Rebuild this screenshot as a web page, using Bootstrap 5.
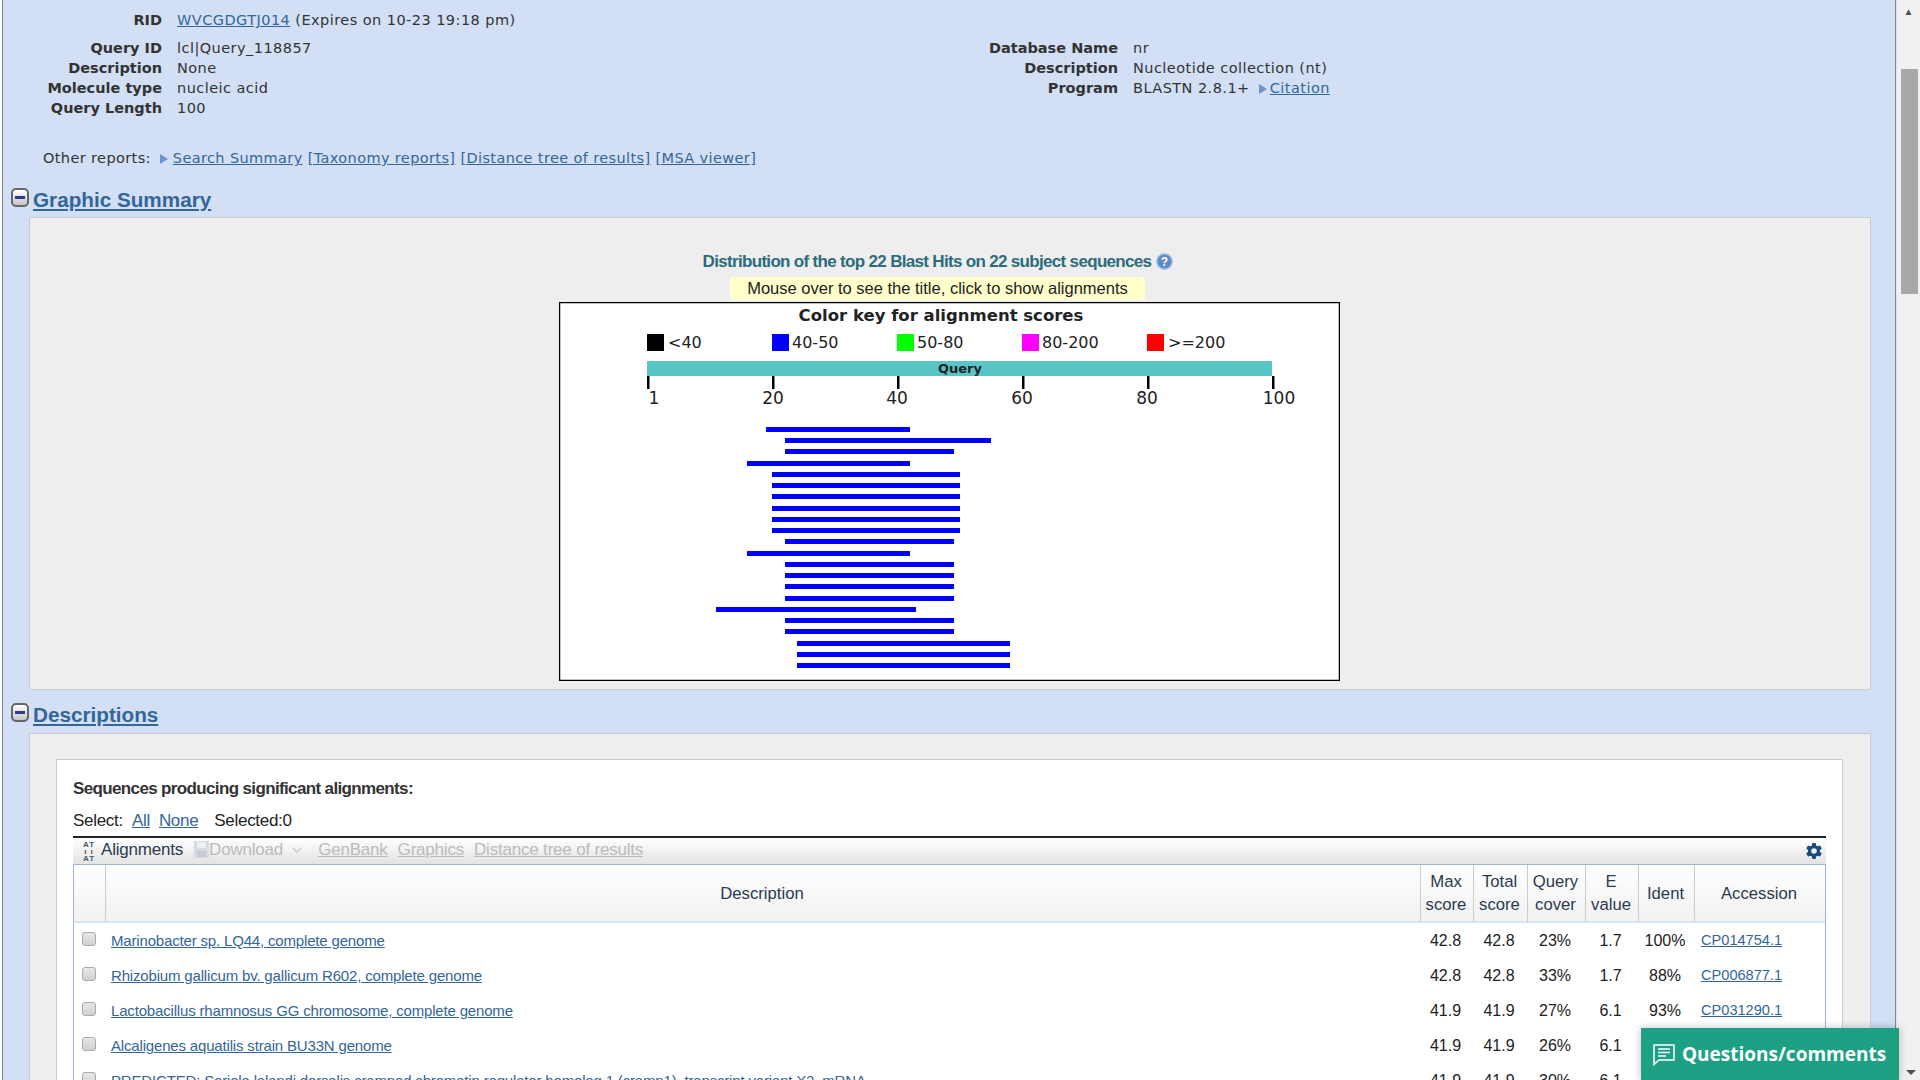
<!DOCTYPE html>
<html lang="en">
<head>
  <meta charset="UTF-8" />
  <title>NCBI Blast: Nucleotide Sequence</title>
  <link href="https://cdn.jsdelivr.net/npm/bootstrap@5.3.0/dist/css/bootstrap.min.css" rel="stylesheet"/>
  <style>
    html, body { height: 100%; overflow: hidden; }
    body { background: #fff; font-family: "Liberation Sans", Arial, sans-serif; font-size: 15px; color: #222; }
    a { color: #336699; }
    .page-wrap { height: 1080px; }
    .blast-main { width: 1894px; height: 1080px; overflow: hidden; margin-left: 2px; background: #d2dff5; border-left: 1px solid #7d8794; border-right: 1px solid #7d8794; padding-left: 8px; flex: none; }
    .fake-scroll { width: 24px; background: #f1f1f1; border-left: 1px solid #e4e4e4; flex: none; }
    .fake-thumb { width: 17px; height: 225px; background: #a8a8a8; margin: 0 2px 0 auto; }
    .scroll-arrow { height: 69px; color: #505050; font-size: 10px; text-align: center; padding-top: 5px; line-height: 14px; }
    .scroll-down { position: absolute; bottom: 5px; right: 4px; width: 0; height: 0; border: 5px solid transparent; border-top: 5px solid #505050; border-bottom: 0; }
    .info-block { font-family: "DejaVu Sans", Verdana, sans-serif; font-size: 14.5px; letter-spacing: .45px; line-height: 20px; color: #333; height: 178px; padding-top: 10px; }
    .info-row { display: flex; }
    .info-key { font-weight: 700; text-align: right; width: 151px; margin-right: 15px; flex: none; letter-spacing: 0; }
    .info-cols { margin-top: 8px; }
    .info-left { width: 931px; flex: none; }
    .info-right .info-key { width: 176px; }
    .other-reports { font-family: "DejaVu Sans", Verdana, sans-serif; font-size: 14.5px; letter-spacing: .38px; line-height: 20px; color: #333; padding-left: 32px; height: 35px; margin-top: -31px; padding-top: 1px; }
    .tri { display: inline-block; width: 0; height: 0; border: 5px solid transparent; border-left: 8px solid #6d94cc; border-right: 0; vertical-align: -1px; margin: 0 3px 0 0; }
    .other-reports .tri { margin-right: 5px; }
    .sec-title { font-size: 20.7px; font-weight: 700; line-height: 24px; height: 35px; display: flex; align-items: center; gap: 4px; }
    .sec-second { height: 37px; }
    .toggle-box { width: 18px; height: 19px; border: 2px solid #666; border-radius: 5px; background: linear-gradient(#fff, #c5c5c5); display: flex; align-items: center; justify-content: center; margin-top: -4px; }
    .toggle-box span { display: block; width: 10px; height: 3px; background: #2a3a8c; }
    .grey-panel { background: #eee; border: 1px solid #ccc; margin-left: 18px; width: 1842px; }
    .graphic-panel { height: 473px; margin-bottom: 6px; padding-top: 33px; }
    .dist-title { font-size: 17px; font-weight: 700; color: #2b6c7c; letter-spacing: -0.68px; line-height: 22px; height: 26px; padding-right: 24px; }
    .help-dot { vertical-align: -3px; margin-left: 5px; }
    .help-dot text { font-family: "Liberation Sans", sans-serif; font-weight: 700; font-size: 12px; fill: #fff; letter-spacing: 0; }
    .hint-box { background: #ffc; width: 415px; height: 23px; line-height: 22px; font-size: 16.5px; color: #222; text-align: center; margin-left: 700px; }
    .score-chart { display: block; width: 781px; height: 379px; margin: 2px 0 0 529px; }
    .score-chart text { font-family: "DejaVu Sans", Verdana, sans-serif; fill: #222; }
    .desc-panel { height: 400px; padding: 25px 27px 0 26px; }
    .white-panel { background: #fff; border: 1px solid #ccc; height: 400px; padding: 0 16px; }
    .seq-title { font-size: 17px; font-weight: 700; letter-spacing: -0.64px; line-height: 20px; padding-top: 19px; height: 51px; color: #333; }
    .sel-line { font-size: 17px; letter-spacing: -0.3px; line-height: 20px; height: 25px; color: #222; display: flex; }
    .sel-line a { margin-left: 9px; }
    .tool-bar { height: 29px; border-top: 2px solid #222; border-bottom: 1px solid #9db6d5; background: linear-gradient(#fff, #e3e3e3); display: flex; align-items: center; font-size: 17px; letter-spacing: -0.2px; padding-left: 9px; padding-bottom: 3px; color: #2a3a50; position: relative; }
    .tool-bar a.off { color: #bbb; margin-right: 10px; }
    .off-text { color: #bbb; margin-right: 9px; }
    .save-icon { margin-left: 11px; }
    .drop-arrow { margin-right: 16px; }
    .at-icon { display: flex; flex-direction: column; align-items: center; width: 14px; font-size: 8px; line-height: 7px; font-weight: 700; letter-spacing: 1px; color: #44566e; margin-right: 5px; margin-top: 3px; }
    .gear-icon { top: 5px; }
    .hits-wrap { border-left: 1px solid #9db6d5; border-right: 1px solid #9db6d5; }
    .hits-table { font-size: 16px; margin: 0; table-layout: fixed; width: 100%; color: #222; border-collapse: separate; border-spacing: 0; }
    .hits-table th { font-weight: 400; font-size: 16.7px; text-align: center; line-height: 23px; padding: 0 2px 0 0; height: 58px; background: linear-gradient(#fff 0%, #f1f1f1 100%); border-bottom: 2px solid #dce4ee; border-left: 1px solid #ccc; color: #2a3a50; vertical-align: middle; }
    .hits-table th:first-child { border-left: 0; }
    .hits-table td { height: 35px; padding: 1px 2px 0 0; text-align: center; vertical-align: middle; }
    .hits-table td.seq-desc { text-align: left; padding-left: 6px; font-size: 15px; letter-spacing: -0.17px; white-space: nowrap; overflow: hidden; }
    .hits-table td.acc { text-align: left; padding-left: 7px; font-size: 14.6px; }
    .hit-check { display: block; width: 14px; height: 14px; border: 1px solid #aaa; border-radius: 3px; background: linear-gradient(#e8e8e8, #d0d0d0); margin: -4px 0 0 8px; }
    .qc-btn { position: absolute; right: 21px; bottom: 0; width: 258px; height: 52px; background: #1da083; color: #fff; font-family: "Open Sans", sans-serif; font-weight: 700; font-size: 19px; display: flex; align-items: center; gap: 6px; padding-left: 11px; box-shadow: 0 0 8px rgba(0,0,0,.25); }
  </style>
</head>
<body>
  <div class="page-wrap d-flex position-relative">
    <div class="blast-main">
      <div class="info-block">
        <div class="info-row"><div class="info-key">RID</div><div><a href="#">WVCGDGTJ014</a> (Expires on 10-23 19:18 pm)</div></div>
        <div class="d-flex info-cols">
          <div class="info-left">
            <div class="info-row"><div class="info-key">Query ID</div><div>lcl|Query_118857</div></div>
            <div class="info-row"><div class="info-key">Description</div><div>None</div></div>
            <div class="info-row"><div class="info-key">Molecule type</div><div>nucleic acid</div></div>
            <div class="info-row"><div class="info-key">Query Length</div><div>100</div></div>
          </div>
          <div class="info-right">
            <div class="info-row"><div class="info-key">Database Name</div><div>nr</div></div>
            <div class="info-row"><div class="info-key">Description</div><div>Nucleotide collection (nt)</div></div>
            <div class="info-row"><div class="info-key">Program</div><div>BLASTN 2.8.1+ <i class="tri ms-1"></i><a href="#">Citation</a></div></div>
          </div>
        </div>
      </div>
      <div class="other-reports">Other reports: <i class="tri ms-1"></i><a href="#">Search Summary</a> <a href="#">[Taxonomy reports]</a> <a href="#">[Distance tree of results]</a> <a href="#">[MSA viewer]</a></div>

      <div class="sec-title"><div class="toggle-box"><span></span></div><a href="#">Graphic Summary</a></div>
      <div class="grey-panel graphic-panel">
        <div class="dist-title text-center">Distribution of the top 22 Blast Hits on 22 subject sequences<svg class="help-dot" width="17" height="17" viewBox="0 0 17 17"><circle cx="8.500" cy="8.500" r="8.500" fill="#a9c2e6"/><circle cx="8.500" cy="8.500" r="7" fill="#5f8cc8"/><text x="8.500" y="13" text-anchor="middle">?</text></svg></div>
        <div class="hint-box">Mouse over to see the title, click to show alignments</div>
        <svg class="score-chart" viewBox="559 302 781 379">
          <rect x="559.500" y="302.500" width="780" height="378" fill="#fff" stroke="#000" stroke-width="1.500"/>
          <text x="941" y="321" text-anchor="middle" font-size="16.500" font-weight="700">Color key for alignment scores</text>
          <rect x="647" y="334" width="17" height="17" fill="#000"/><text x="668" y="348" font-size="16">&lt;40</text>
          <rect x="772" y="334" width="17" height="17" fill="#00f"/><text x="792" y="348" font-size="16">40-50</text>
          <rect x="897" y="334" width="17" height="17" fill="#0f0"/><text x="917" y="348" font-size="16">50-80</text>
          <rect x="1022" y="334" width="17" height="17" fill="#f0f"/><text x="1042" y="348" font-size="16">80-200</text>
          <rect x="1147" y="334" width="17" height="17" fill="#f00"/><text x="1168" y="348" font-size="16">&gt;=200</text>
          <rect x="647" y="361" width="625" height="15" fill="#58c6c6"/>
          <text x="960" y="373" text-anchor="middle" font-size="13" font-weight="700">Query</text>
          <g fill="#000">
            <rect x="647" y="376" width="2.500" height="13"/><rect x="772" y="376" width="2.500" height="13"/><rect x="897" y="376" width="2.500" height="13"/>
            <rect x="1022" y="376" width="2.500" height="13"/><rect x="1147" y="376" width="2.500" height="13"/><rect x="1272" y="376" width="2.500" height="13"/>
          </g>
          <g font-size="17" text-anchor="middle">
            <text x="654" y="404">1</text><text x="773" y="404">20</text><text x="897" y="404">40</text>
            <text x="1022" y="404">60</text><text x="1147" y="404">80</text><text x="1279" y="404">100</text>
          </g>
          <g fill="#00f">
            <rect x="766" y="427" width="144" height="5"/>
            <rect x="785" y="438" width="206" height="5"/>
            <rect x="785" y="449" width="169" height="5"/>
            <rect x="747" y="461" width="163" height="5"/>
            <rect x="772" y="472" width="188" height="5"/>
            <rect x="772" y="483" width="188" height="5"/>
            <rect x="772" y="494" width="188" height="5"/>
            <rect x="772" y="506" width="188" height="5"/>
            <rect x="772" y="517" width="188" height="5"/>
            <rect x="772" y="528" width="188" height="5"/>
            <rect x="785" y="539" width="169" height="5"/>
            <rect x="747" y="551" width="163" height="5"/>
            <rect x="785" y="562" width="169" height="5"/>
            <rect x="785" y="573" width="169" height="5"/>
            <rect x="785" y="584" width="169" height="5"/>
            <rect x="785" y="596" width="169" height="5"/>
            <rect x="716" y="607" width="200" height="5"/>
            <rect x="785" y="618" width="169" height="5"/>
            <rect x="785" y="629" width="169" height="5"/>
            <rect x="797" y="641" width="213" height="5"/>
            <rect x="797" y="652" width="213" height="5"/>
            <rect x="797" y="663" width="213" height="5"/>
          </g>
        </svg>
      </div>

      <div class="sec-title sec-second"><div class="toggle-box"><span></span></div><a href="#">Descriptions</a></div>
      <div class="grey-panel desc-panel">
        <div class="white-panel">
          <div class="seq-title">Sequences producing significant alignments:</div>
          <div class="sel-line"><span>Select:</span><a href="#">All</a><a href="#">None</a><span class="ms-3">Selected:0</span></div>
          <div class="tool-bar">
            <div class="at-icon"><span>AT</span><span>ı ı</span><span>AT</span></div>
            <span>Alignments</span>
            <svg width="15" height="17" viewBox="0 0 15 17" class="save-icon"><rect width="15" height="17" rx="1" fill="#d6dbe2"/><rect x="3" y="1" width="9" height="6" fill="#eef0f3"/><rect x="3" y="10" width="9" height="6" fill="#c5cbd4"/></svg>
            <span class="off-text">Download</span>
            <svg width="10" height="6" viewBox="0 0 10 6" class="drop-arrow"><path d="M1 1l4 4 4-4" fill="none" stroke="#c5cbd4" stroke-width="1.500"/></svg>
            <a href="#" class="off">GenBank</a><a href="#" class="off">Graphics</a><a href="#" class="off">Distance tree of results</a>
            <svg width="16" height="16" viewBox="0 0 16 16" class="position-absolute end-0 me-1 gear-icon"><g fill="#1a4a80"><circle cx="8" cy="8" r="6"/><rect x="6" y="0" width="4" height="16" rx="1"/><rect x="6" y="0" width="4" height="16" rx="1" transform="rotate(60 8 8)"/><rect x="6" y="0" width="4" height="16" rx="1" transform="rotate(120 8 8)"/></g><circle cx="8" cy="8" r="2.800" fill="#eee"/></svg>
          </div>
          <div class="hits-wrap">
            <table class="hits-table">
              <colgroup><col style="width:31px"><col><col style="width:53px"><col style="width:54px"><col style="width:58px"><col style="width:53px"><col style="width:56px"><col style="width:131px"></colgroup>
              <thead><tr><th></th><th>Description</th><th>Max<br>score</th><th>Total<br>score</th><th>Query<br>cover</th><th>E<br>value</th><th>Ident</th><th>Accession</th></tr></thead>
              <tbody>
                <tr><td><i class="hit-check"></i></td><td class="seq-desc"><a href="#">Marinobacter sp. LQ44, complete genome</a></td><td>42.8</td><td>42.8</td><td>23%</td><td>1.7</td><td>100%</td><td class="acc"><a href="#">CP014754.1</a></td></tr>
                <tr><td><i class="hit-check"></i></td><td class="seq-desc"><a href="#">Rhizobium gallicum bv. gallicum R602, complete genome</a></td><td>42.8</td><td>42.8</td><td>33%</td><td>1.7</td><td>88%</td><td class="acc"><a href="#">CP006877.1</a></td></tr>
                <tr><td><i class="hit-check"></i></td><td class="seq-desc"><a href="#">Lactobacillus rhamnosus GG chromosome, complete genome</a></td><td>41.9</td><td>41.9</td><td>27%</td><td>6.1</td><td>93%</td><td class="acc"><a href="#">CP031290.1</a></td></tr>
                <tr><td><i class="hit-check"></i></td><td class="seq-desc"><a href="#">Alcaligenes aquatilis strain BU33N genome</a></td><td>41.9</td><td>41.9</td><td>26%</td><td>6.1</td><td></td><td class="acc"></td></tr>
                <tr><td><i class="hit-check"></i></td><td class="seq-desc"><a href="#">PREDICTED: Seriola lalandi dorsalis cramped chromatin regulator homolog 1 (cramp1), transcript variant X2, mRNA</a></td><td>41.9</td><td>41.9</td><td>30%</td><td>6.1</td><td></td><td class="acc"></td></tr>
              </tbody>
            </table>
          </div>
        </div>
      </div>
    </div>
    <div class="fake-scroll">
      <div class="scroll-arrow">&#9650;</div>
      <div class="fake-thumb"></div>
    </div>
    <div class="scroll-down"></div>
    <div class="qc-btn">
      <svg width="24" height="24" viewBox="0 0 24 24"><path d="M2 3h20v15H7l-5 4.500z" fill="none" stroke="#fff" stroke-width="1.500"/><path d="M6 7h12M6 10.500h12M6 14h8" stroke="#fff" stroke-width="1.500"/></svg>
      <span>Questions/comments</span>
    </div>
  </div>
</body>
</html>
